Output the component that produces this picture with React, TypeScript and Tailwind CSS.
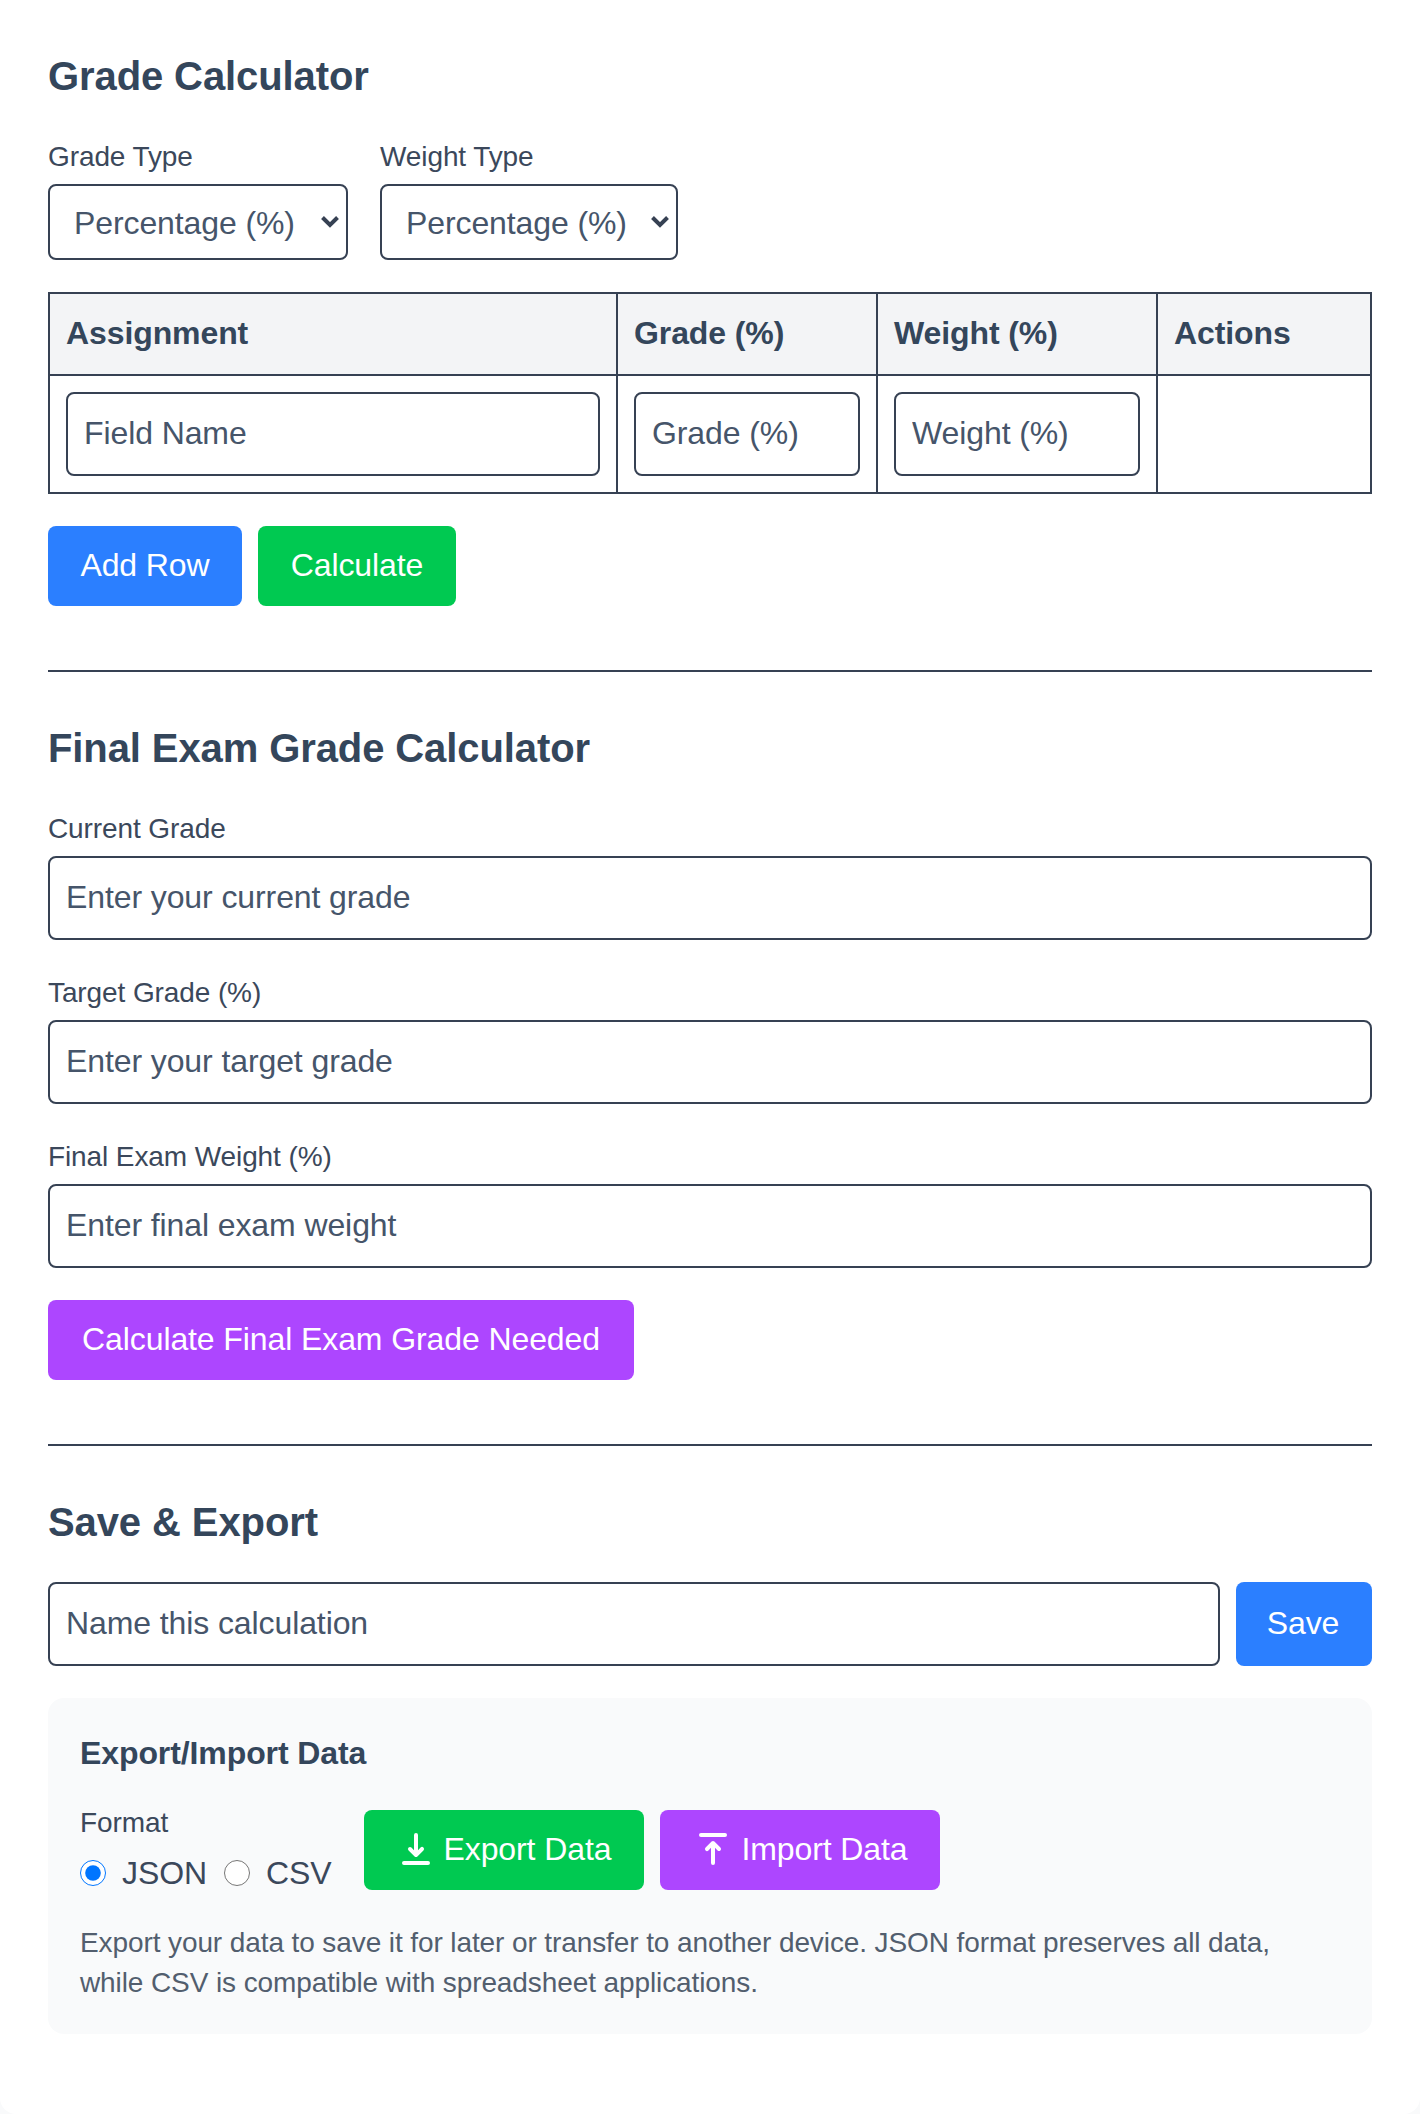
import React from "react";

const inputCls =
  "block w-full h-[84px] border-2 border-[#364153] rounded-lg px-4 pb-[2px] text-[32px] leading-[48px] text-[#364153] bg-white placeholder:text-[#46556a] placeholder:opacity-100 outline-none";
const labelCls = "block pt-[1px] text-[28px] leading-[40px] text-[#3b485b] mb-[7px]";
const titleCls = "text-[40px] leading-[56px] font-bold text-[#34465b] mb-8";
const btnCls = "h-20 rounded-lg pb-[2px] text-white text-[32px] leading-[48px]";
const thCls =
  "border-2 border-[#364153] bg-gray-100 px-4 pt-[15px] pb-[17px] text-left text-[32px] leading-[48px] font-bold text-[#34465b]";
const tdCls = "border-2 border-[#364153] p-4 align-top";

function Chevron() {
  return (
    <svg
      className="absolute right-[9px] top-[32px] pointer-events-none"
      width="18"
      height="12"
      viewBox="0 0 18 12"
      fill="none"
      stroke="#364153"
      strokeWidth="4"
    >
      <path d="M1.5 1.5L9 9L16.5 1.5" />
    </svg>
  );
}

function SelectField({ label, width }: { label: string; width: string }) {
  return (
    <div>
      <label className={labelCls}>{label}</label>
      <div className={"relative " + width}>
        <select className="appearance-none block w-full h-[76px] border-2 border-[#364153] rounded-lg pl-[24px] pr-10 pt-[2px] text-[32px] text-[#46556a] bg-white outline-none">
          <option>Percentage (%)</option>
        </select>
        <Chevron />
      </div>
    </div>
  );
}

function TransferIcon({ flip }: { flip?: boolean }) {
  return (
    <svg
      className={flip ? "w-10 h-10 mr-2 rotate-180" : "w-10 h-10 mr-2"}
      viewBox="0 0 20 20"
      fill="currentColor"
    >
      <path
        fillRule="evenodd"
        clipRule="evenodd"
        d="M3 17a1 1 0 011-1h12a1 1 0 110 2H4a1 1 0 01-1-1zm3.293-7.707a1 1 0 011.414 0L9 10.586V3a1 1 0 112 0v7.586l1.293-1.293a1 1 0 111.414 1.414l-3 3a1 1 0 01-1.414 0l-3-3a1 1 0 010-1.414z"
      />
    </svg>
  );
}

function TextField({ label, placeholder }: { label: string; placeholder: string }) {
  return (
    <div className="mb-8">
      <label className={labelCls}>{label}</label>
      <input type="text" className={inputCls} placeholder={placeholder} />
    </div>
  );
}

export default function App() {
  return (
    <div className="bg-gray-50 font-['Liberation_Sans',Arial,sans-serif] tracking-[-0.1px]">
      <div className="bg-white rounded-b-2xl px-12 pt-12 pb-20">
        <section>
          <h2 className={titleCls}>Grade Calculator</h2>
          <div className="flex gap-8 mb-8">
            <SelectField label="Grade Type" width="w-[300px]" />
            <SelectField label="Weight Type" width="w-[298px]" />
          </div>
          <table className="w-full table-fixed border-collapse mb-8">
            <colgroup>
              <col className="w-[568px]" />
              <col className="w-[260px]" />
              <col className="w-[280px]" />
              <col />
            </colgroup>
            <thead>
              <tr>
                <th className={thCls}>Assignment</th>
                <th className={thCls}>Grade (%)</th>
                <th className={thCls}>Weight (%)</th>
                <th className={thCls}>Actions</th>
              </tr>
            </thead>
            <tbody>
              <tr>
                <td className={tdCls}>
                  <input type="text" className={inputCls} placeholder="Field Name" />
                </td>
                <td className={tdCls}>
                  <input type="text" className={inputCls} placeholder="Grade (%)" />
                </td>
                <td className={tdCls}>
                  <input type="text" className={inputCls} placeholder="Weight (%)" />
                </td>
                <td className={tdCls}></td>
              </tr>
            </tbody>
          </table>
          <div className="flex gap-4">
            <button className={btnCls + " w-[194px] bg-blue-500"}>Add Row</button>
            <button className={btnCls + " w-[198px] bg-green-500"}>Calculate</button>
          </div>
        </section>

        <section className="mt-16 pt-12 border-t-2 border-[#364153]">
          <h2 className={titleCls}>Final Exam Grade Calculator</h2>
          <TextField label="Current Grade" placeholder="Enter your current grade" />
          <TextField label="Target Grade (%)" placeholder="Enter your target grade" />
          <TextField label="Final Exam Weight (%)" placeholder="Enter final exam weight" />
          <button className={btnCls + " w-[586px] bg-purple-500"}>Calculate Final Exam Grade Needed</button>
        </section>

        <section className="mt-16 pt-12 border-t-2 border-[#364153]">
          <h2 className={titleCls}>Save &amp; Export</h2>
          <div className="flex gap-4 mb-8">
            <input type="text" className={inputCls + " flex-1 min-w-0"} placeholder="Name this calculation" />
            <button className="h-[84px] w-[136px] pb-[2px] pr-[2px] rounded-lg bg-blue-500 text-white text-[32px] leading-[48px]">Save</button>
          </div>
          <div className="bg-gray-50 rounded-2xl px-8 pt-[31px] pb-8">
            <h3 className="text-[32px] leading-[48px] font-bold text-[#34465b] mb-[25px]">Export/Import Data</h3>
            <div className="flex items-center gap-8 mb-[25px]">
              <div>
                <label className={labelCls}>Format</label>
                <div className="flex items-center h-12 pb-[2px] text-[32px] text-[#3b485b]">
                  <input type="radio" name="format" defaultChecked className="w-[26px] h-[26px] m-0" />
                  <span className="ml-4 mr-[17px]">JSON</span>
                  <input type="radio" name="format" className="w-[26px] h-[26px] m-0" />
                  <span className="ml-4">CSV</span>
                </div>
              </div>
              <div className="flex gap-4 ml-[1px]">
                <button className={btnCls + " w-[280px] pr-[2px] justify-center bg-green-500 flex items-center"}>
                  <TransferIcon />
                  Export Data
                </button>
                <button className={btnCls + " w-[280px] justify-center bg-purple-500 flex items-center"}>
                  <TransferIcon flip />
                  Import Data
                </button>
              </div>
            </div>
            <p className="text-[28px] leading-[40px] text-[#525e6e] mb-[-1px]">
              Export your data to save it for later or transfer to another device. JSON format preserves all data, while CSV is compatible with spreadsheet applications.
            </p>
          </div>
        </section>
      </div>
    </div>
  );
}
